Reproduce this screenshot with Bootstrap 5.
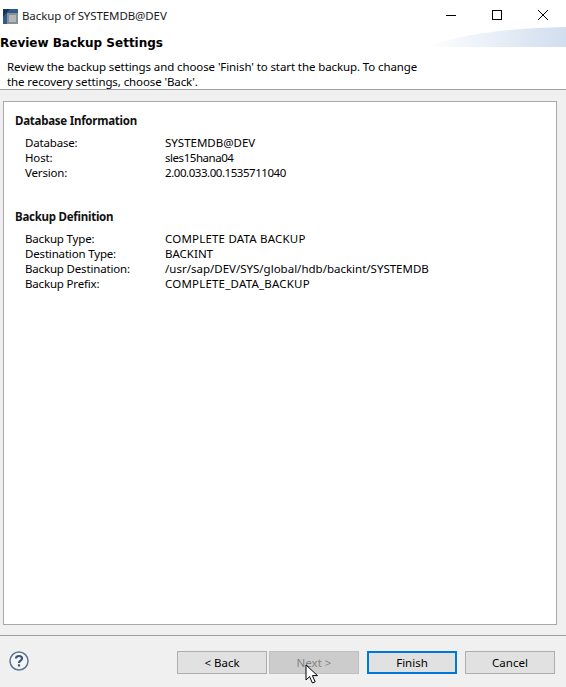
<!DOCTYPE html>
<html lang="en">
<head>
    <meta charset="UTF-8">
    <title>Backup of SYSTEMDB@DEV</title>
    <link href="https://cdn.jsdelivr.net/npm/bootstrap@5.3.0/dist/css/bootstrap.min.css" rel="stylesheet">
    <style>
        html, body { height: 100%; }
        body {
            font-family: "Noto Sans", "Open Sans", sans-serif;
            font-size: 11.5px;
            line-height: 15px;
            color: #000;
            background: #f0f0f0;
            overflow: hidden;
        }
        .wiz-window { height: 687px; }
        .wiz-titlebar { height: 30px; background: #fff; }
        .wiz-title { margin-left: 4px; font-size: 11.5px; letter-spacing: -.1px; color: #1a1a1a; }
        .wiz-appicon { margin-left: 2px; margin-top: 1px; }
        .wiz-sysbtn { width: 46px; height: 30px; }
        .wiz-header { height: 60px; background: #fff; border-bottom: 1px solid #a0a0a0; position: relative; }
        .wiz-banner { position: absolute; right: 0; top: -3px; }
        .wiz-heading { font-family: "DejaVu Sans", sans-serif; font-weight: 700; font-size: 12px; line-height: 16px; padding-top: 5px; }
        .wiz-desc { padding: 8px 0 0 7px; width: 430px; letter-spacing: -.1px; }
        .wiz-body { height: 545px; padding: 11px 9px 10px 3px; }
        .wiz-panel { height: 100%; background: #fff; border: 1px solid #a8a8a8; padding: 11px 11px; }
        .wiz-section { font-weight: 700; line-height: 16px; margin-bottom: 6px; letter-spacing: -.25px; color: #111; }
        .wiz-rows { padding-left: 10px; margin-bottom: 29px; }
        .wiz-label { width: 140px; flex: none; letter-spacing: -.17px; }
        .wiz-caps { letter-spacing: .2px; }
        .wiz-digits { letter-spacing: -.45px; }
        .wiz-footer { border-top: 1px solid #a0a0a0; height: 52px; padding: 15px 11px 0 9px; position: relative; }
        .wiz-btn {
            width: 90px; height: 23px; padding: 0;
            font-size: 11.5px; line-height: 19px; color: #000;
            background: #e1e1e1; border: 1px solid #adadad; border-radius: 0;
        }
        .wiz-btn:disabled { background: #ccc; border-color: #bfbfbf; color: #838383; opacity: 1; }
        .wiz-btn-default { border: 2px solid #0078d7; }
        .wiz-btn-next { margin-left: 2px; }
        .wiz-cursor { position: absolute; left: 305px; top: 28px; }
    </style>
</head>
<body>
    <div class="wiz-window d-flex flex-column">
        <!-- title bar -->
        <div class="wiz-titlebar d-flex align-items-center">
            <svg class="wiz-appicon" width="16" height="16" viewBox="0 0 16 16">
                <rect x="1" y="1" width="15" height="15" fill="#2d5c8f"/>
                <path d="M1 1h7L1 9z" fill="#16365f"/>
                <rect x="5" y="5" width="11" height="11" fill="#8a8f94"/>
                <rect x="7" y="7" width="7" height="7" fill="#b4b6b8"/>
            </svg>
            <span class="wiz-title flex-grow-1">Backup of SYSTEMDB@DEV</span>
            <div class="d-flex">
                <div class="wiz-sysbtn d-flex align-items-center justify-content-center">
                    <svg width="10" height="10"><path d="M0 5.5h10" stroke="#000"/></svg>
                </div>
                <div class="wiz-sysbtn d-flex align-items-center justify-content-center">
                    <svg width="10" height="10"><rect x=".5" y=".5" width="9" height="9" fill="none" stroke="#000"/></svg>
                </div>
                <div class="wiz-sysbtn d-flex align-items-center justify-content-center">
                    <svg width="10" height="10"><path d="M0 0l10 10M10 0L0 10" stroke="#000"/></svg>
                </div>
            </div>
        </div>

        <!-- page header -->
        <div class="wiz-header">
            <svg class="wiz-banner" width="140" height="20" viewBox="0 0 140 20">
                <defs>
                    <linearGradient id="bannerFill" x1="0" x2="1" y1="0" y2="0">
                        <stop offset="0" stop-color="#fff"/>
                        <stop offset="1" stop-color="#d0deef"/>
                    </linearGradient>
                </defs>
                <path d="M0 20C30 8 80 1 140 0V20z" fill="url(#bannerFill)"/>
            </svg>
            <div class="wiz-heading">Review Backup Settings</div>
            <div class="wiz-desc">Review the backup settings and choose 'Finish' to start the backup. To change the recovery settings, choose 'Back'.</div>
        </div>

        <!-- summary -->
        <div class="wiz-body">
            <div class="wiz-panel">
                <div class="wiz-section">Database Information</div>
                <div class="wiz-rows">
                    <div class="d-flex"><span class="wiz-label">Database:</span><span>SYSTEMDB@DEV</span></div>
                    <div class="d-flex"><span class="wiz-label">Host:</span><span class="wiz-digits">sles15hana04</span></div>
                    <div class="d-flex"><span class="wiz-label">Version:</span><span class="wiz-digits">2.00.033.00.1535711040</span></div>
                </div>
                <div class="wiz-section">Backup Definition</div>
                <div class="wiz-rows">
                    <div class="d-flex"><span class="wiz-label">Backup Type:</span><span class="wiz-caps">COMPLETE DATA BACKUP</span></div>
                    <div class="d-flex"><span class="wiz-label">Destination Type:</span><span>BACKINT</span></div>
                    <div class="d-flex"><span class="wiz-label">Backup Destination:</span><span>/usr/sap/DEV/SYS/global/hdb/backint/SYSTEMDB</span></div>
                    <div class="d-flex"><span class="wiz-label">Backup Prefix:</span><span class="wiz-caps">COMPLETE_DATA_BACKUP</span></div>
                </div>
            </div>
        </div>

        <!-- buttons -->
        <div class="wiz-footer d-flex align-items-start">
            <svg class="flex-shrink-0" width="20" height="20" viewBox="0 0 20 20">
                <circle cx="10" cy="10" r="9" fill="#f4f5f7" stroke="#5f7492" stroke-width="1.5"/>
                <path d="M7 7.6C7 5.8 8.3 5 10 5s3 .9 3 2.5c0 2.3-3 2.2-3 4.6" fill="none" stroke="#3f5472" stroke-width="2.2"/>
                <rect x="8.9" y="13.3" width="2.2" height="2.2" fill="#3f5472"/>
            </svg>
            <div class="d-flex ms-auto">
                <button class="btn wiz-btn">&lt; Back</button>
                <button class="btn wiz-btn wiz-btn-next" disabled>Next &gt;</button>
                <button class="btn wiz-btn wiz-btn-default ms-2">Finish</button>
                <button class="btn wiz-btn ms-2">Cancel</button>
            </div>
            <svg class="wiz-cursor" width="14" height="21" viewBox="0 0 14 21">
                <path d="M1 1v15l3.6-3.4L7.4 19l2.8-1.2-2.8-6.2H12.5z" fill="#fff" stroke="#000"/>
            </svg>
        </div>
    </div>
    <script src="https://cdn.jsdelivr.net/npm/bootstrap@5.3.0/dist/js/bootstrap.bundle.min.js"></script>
</body>
</html>
